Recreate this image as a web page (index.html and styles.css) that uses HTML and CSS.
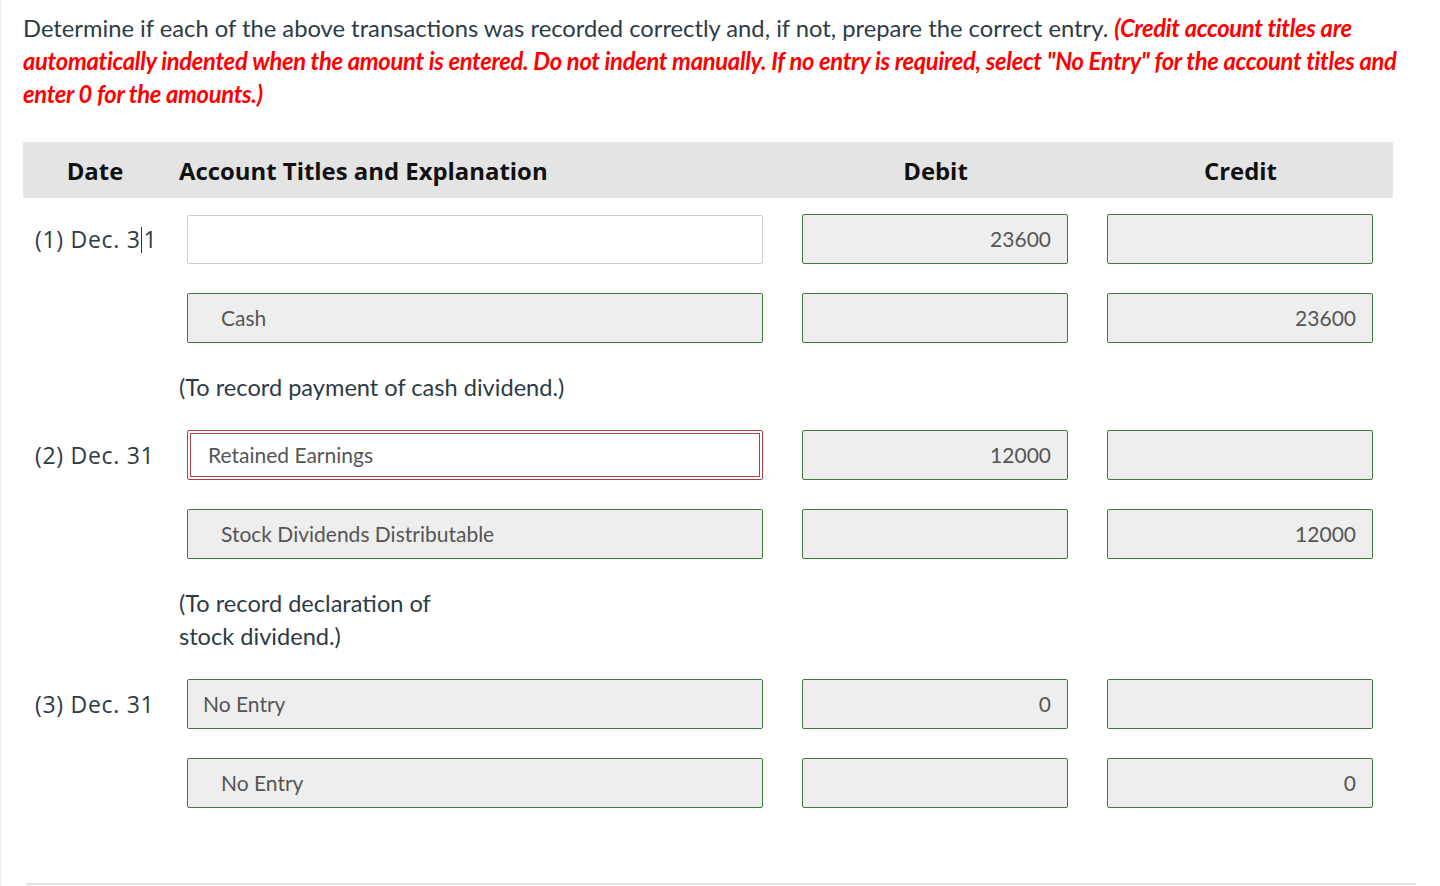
FILE: index.html
```html
<!DOCTYPE html>
<html lang="en">
<head>
    <meta charset="UTF-8">
    <title>Journal Entries</title>
    <link rel="stylesheet" href="styles.css">
</head>
<body>
    <div class="page">
        <p class="intro">Determine if each of the above transactions was recorded correctly and, if not, prepare the correct entry. <em class="note">(Credit account titles are automatically indented when the amount is entered. Do not indent manually. If no entry is required, select "No Entry" for the account titles and enter 0 for the amounts.)</em></p>

        <div class="journal">
            <div class="head">
                <div class="h-date">Date</div>
                <div class="h-account">Account Titles and Explanation</div>
                <div class="h-amt">Debit</div>
                <div class="h-amt">Credit</div>
            </div>

            <!-- entry 1 -->
            <div class="row">
                <div class="date">(1) Dec. 3<span class="caret"></span>1</div>
                <div class="cell-acct"><div class="field blank"></div></div>
                <div class="cell-amt"><div class="field num">23600</div></div>
                <div class="cell-amt"><div class="field num"></div></div>
            </div>
            <div class="row">
                <div class="date"></div>
                <div class="cell-acct"><div class="field credit">Cash</div></div>
                <div class="cell-amt"><div class="field num"></div></div>
                <div class="cell-amt"><div class="field num">23600</div></div>
            </div>
            <div class="explain">(To record payment of cash dividend.)</div>

            <!-- entry 2 -->
            <div class="row">
                <div class="date">(2) Dec. 31</div>
                <div class="cell-acct"><div class="field wrong">Retained Earnings</div></div>
                <div class="cell-amt"><div class="field num">12000</div></div>
                <div class="cell-amt"><div class="field num"></div></div>
            </div>
            <div class="row">
                <div class="date"></div>
                <div class="cell-acct"><div class="field credit">Stock Dividends Distributable</div></div>
                <div class="cell-amt"><div class="field num"></div></div>
                <div class="cell-amt"><div class="field num">12000</div></div>
            </div>
            <div class="explain narrow">(To record declaration of stock dividend.)</div>

            <!-- entry 3 -->
            <div class="row">
                <div class="date">(3) Dec. 31</div>
                <div class="cell-acct"><div class="field">No Entry</div></div>
                <div class="cell-amt"><div class="field num">0</div></div>
                <div class="cell-amt"><div class="field num"></div></div>
            </div>
            <div class="row">
                <div class="date"></div>
                <div class="cell-acct"><div class="field credit">No Entry</div></div>
                <div class="cell-amt"><div class="field num"></div></div>
                <div class="cell-amt"><div class="field num">0</div></div>
            </div>
        </div>
        <div class="bottom-rule"></div>
    </div>
</body>
</html>
```
FILE: styles.css
```css
body {
    margin: 0;
    background: #ffffff;
    font-family: Lato, "Open Sans", sans-serif;
    color: #2d3b45;
}

.page {
    border-left: 1px solid #f0f0f0;
    min-height: 886px;
    box-sizing: border-box;
    padding-top: 12px;
}

.intro {
    width: 1408px;
    margin: 0 0 31px 22px;
    font-size: 23.75px;
    line-height: 33px;
}

.note {
    color: #ff0000;
    font-weight: bold;
    letter-spacing: -0.3px;
}

.journal {
    margin-left: 22px;
    width: 1370px;
}

.head,
.row {
    display: grid;
    grid-template-columns: 156px 604px 305px 305px;
}

.head {
    background: #e4e4e4;
    height: 56px;
    align-items: center;
    font-family: "Open Sans", sans-serif;
    font-weight: bold;
    font-size: 23.9px;
    color: #111;
    margin-bottom: 16px;
}

.h-date {
    text-align: center;
    padding-right: 12px;
}

.h-amt {
    text-align: center;
}

.row {
    align-items: center;
    margin-bottom: 29px;
}

.date {
    padding-left: 12px;
    font-family: "Open Sans", sans-serif;
    font-size: 23px;
    letter-spacing: 0.7px;
    color: #2d3b45;
}

.caret {
    display: inline-block;
    width: 1px;
    height: 26px;
    background: #2d3b45;
    vertical-align: -5px;
    margin: 0 1px;
}

.cell-acct {
    padding-left: 8px;
    padding-right: 20px;
}

.cell-amt {
    display: flex;
    padding-left: 19px;
}

.field {
    box-sizing: border-box;
    height: 50px;
    width: 100%;
    border: 1px solid #3f7a3d;
    border-radius: 2px;
    background: #eeeeee;
    color: #555555;
    font-size: 21px;
    line-height: 48px;
    padding: 0 15px;
    white-space: nowrap;
}

.cell-amt .field {
    width: 266px;
}

.field.num {
    text-align: right;
    padding-right: 16px;
}

.field.credit {
    padding-left: 33px;
}

.field.blank {
    background: #ffffff;
    border-color: #cccccc;
    height: 49px;
}

.field.wrong {
    background: #ffffff;
    border: 4px double #b0413e;
    line-height: 42px;
    padding-left: 17px;
}

.explain {
    margin: -1px 0 26px 156px;
    font-size: 23.6px;
    line-height: 33px;
}

.explain.narrow {
    width: 300px;
}

.bottom-rule {
    margin: 75px 0 0 25px;
    width: 1390px;
    border-top: 2px solid #e4e4e4;
}
```
